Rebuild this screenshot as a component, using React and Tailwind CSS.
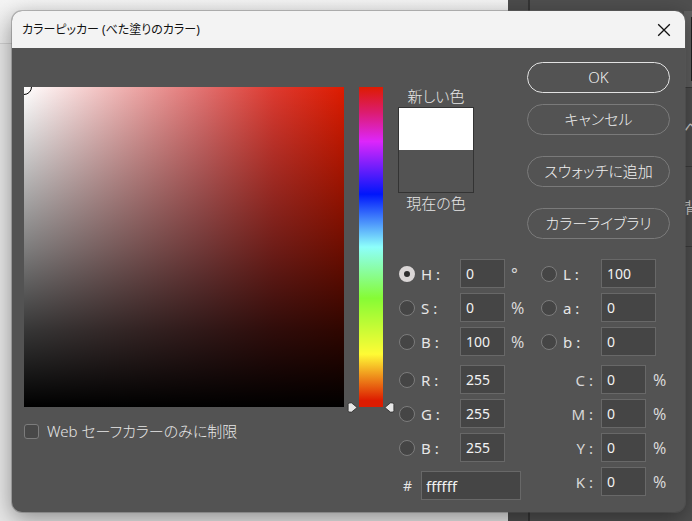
import { useState } from "react";

const BUTTON =
  "flex h-[31px] w-full items-center justify-center rounded-full border text-[15px] font-light text-[#f0f0f0]";

const RADIO =
  "size-4 shrink-0 appearance-none rounded-full border border-[#7c7c7c] bg-[#454545] checked:border-5 checked:border-[#dad6d6] checked:bg-[#2e2e2e]";

const LEFT_GROUPS = [
  [
    { id: "h", label: "H", value: "0", unit: "°" },
    { id: "s", label: "S", value: "0", unit: "%" },
    { id: "v", label: "B", value: "100", unit: "%" },
  ],
  [
    { id: "r", label: "R", value: "255" },
    { id: "g", label: "G", value: "255" },
    { id: "b", label: "B", value: "255" },
  ],
];

const LAB = [
  { id: "lab-l", label: "L", value: "100" },
  { id: "lab-a", label: "a", value: "0" },
  { id: "lab-b", label: "b", value: "0" },
];

const CMYK = [
  { id: "c", label: "C", value: "0" },
  { id: "m", label: "M", value: "0" },
  { id: "y", label: "Y", value: "0" },
  { id: "k", label: "K", value: "0" },
];

function NumberBox({ id, value, wide }) {
  return (
    <input
      id={id}
      type="text"
      defaultValue={value}
      className={`h-[29px] shrink-0 border border-[#686868] bg-[#454545] px-[5px] text-sm text-[#f2f2f2] outline-none ${wide ? "w-[55px]" : "w-[45px]"}`}
    />
  );
}

function ChannelRow({ field, mode, onMode, wide }) {
  return (
    <div className="flex items-center">
      <input
        type="radio"
        name="mode"
        aria-label={field.label}
        checked={mode === field.id}
        onChange={() => onMode(field.id)}
        className={RADIO}
      />
      <label
        htmlFor={field.id}
        className={`whitespace-pre pl-1.5 text-[15px] leading-5 ${wide ? "w-11" : "w-[45px]"}`}
      >
        {field.label} :
      </label>
      <NumberBox id={field.id} value={field.value} wide={wide} />
      {field.unit && (
        <span className="pl-1.5 text-base leading-5 text-[#d8d8d8]">{field.unit}</span>
      )}
    </div>
  );
}

function Backdrop() {
  return (
    <div className="absolute inset-0 flex overflow-hidden" aria-hidden="true">
      <div className="flex flex-1 flex-col bg-[#e6e6e6]">
        <div className="h-11 border-b border-[#cfcfcf] bg-linear-to-b from-[#f4f4f4] to-[#e9e9e9]" />
      </div>
      <div className="w-5 bg-[#4c4c4c]" />
      <div className="w-0.5 bg-[#353535]" />
      <div className="flex w-[162px] flex-col items-end bg-[#4f4f4f] text-[15px] leading-4 text-[#d0d0d0]">
        <div className="mt-[11px] h-[77px] w-2 border-b border-[#3c3c3c] bg-[#606060] py-1.5">
          <div className="ml-auto h-full w-px bg-[#222]" />
        </div>
        <div className="flex h-[79px] w-2 items-center justify-start overflow-hidden border-b border-[#3c3c3c]">
          <span>ペ</span>
        </div>
        <div className="flex h-20 w-2 items-center justify-start overflow-hidden border-b border-[#3c3c3c]">
          <span>背</span>
        </div>
      </div>
    </div>
  );
}

function ColorField() {
  return (
    <div className="relative h-80 min-w-0 flex-1 overflow-hidden bg-[linear-gradient(to_bottom,transparent,rgba(0,0,0,0.5)_50%,rgba(0,0,0,0.79)_76%,#000),linear-gradient(to_right,#fff,#e2706f_56%,#de3a30_78%,#dd1b00)]">
      <div className="absolute -top-2 -left-2 size-4 rounded-full border border-black" />
    </div>
  );
}

function HueSlider() {
  return (
    <div className="relative mx-[15px] h-80 w-6 shrink-0">
      <input
        type="range"
        min="0"
        max="360"
        defaultValue="0"
        aria-label="H"
        className="block h-full w-full appearance-none bg-[linear-gradient(to_bottom,#dd1b00,#dc1c70_8%,#dd26fb_17%,#0016fb_33.5%,#8dfffb_50%,#86fb35_66%,#fffb35_83.5%,#dd1b00_98%)] [direction:rtl] [writing-mode:vertical-lr] [&::-webkit-slider-thumb]:opacity-0"
      />
      <svg
        viewBox="0 0 10 10"
        className="absolute -bottom-1.5 -left-3 size-[11px]"
      >
        <path
          d="M1 2.2Q1 .8 2.6.8H4.2L9.2 5 4.2 9.2H2.6Q1 9.2 1 7.8Z"
          fill="#e6e6e6"
          stroke="#333"
          strokeWidth=".8"
        />
      </svg>
      <svg
        viewBox="0 0 10 10"
        className="absolute -right-3 -bottom-1.5 size-[11px]"
      >
        <path
          d="M9 2.2Q9 .8 7.4.8H5.8L.8 5 5.8 9.2H7.4Q9 9.2 9 7.8Z"
          fill="#e6e6e6"
          stroke="#333"
          strokeWidth=".8"
        />
      </svg>
    </div>
  );
}

export default function App() {
  const [mode, setMode] = useState("h");

  return (
    <div className="relative min-h-screen pt-[11px] pr-[7px] pb-[9px] pl-3 font-['Noto_Sans','Noto_Sans_CJK_JP',sans-serif] [font-feature-settings:'palt']">
      <Backdrop />
      <div
        role="dialog"
        aria-labelledby="title"
        className="relative overflow-hidden rounded-[10px] bg-[#535353] text-sm text-[#e6e6e6] shadow-[0_6px_22px_rgba(0,0,0,0.4),0_0_0_1px_rgba(120,120,120,0.4)]"
      >
        <header className="flex h-[37px] items-center justify-between bg-[#f3f3f3] pr-3.5 pl-2.5 text-[#111]">
          <h1 id="title" className="text-xs">
            カラーピッカー (べた塗りのカラー)
          </h1>
          <button type="button" aria-label="閉じる">
            <svg viewBox="0 0 14 14" className="size-3.5" stroke="#111" strokeWidth="1.3">
              <path d="M1.2 1.2 12.8 12.8M12.8 1.2 1.2 12.8" />
            </svg>
          </button>
        </header>

        <div className="flex pr-[15px] pb-3 pl-3">
          <div className="flex min-w-0 flex-1 flex-col pt-[39px]">
            <div className="flex">
              <ColorField />
              <HueSlider />
            </div>
            <label className="mt-3 flex items-center gap-2 text-[15px] leading-6 font-light">
              <input
                type="checkbox"
                className="size-[15px] shrink-0 appearance-none rounded-[3px] border border-[#7c7c7c] bg-[#484848]"
              />
              Web セーフカラーのみに制限
            </label>
          </div>

          <div className="flex w-[272px] shrink-0 flex-col">
            <div className="flex justify-between pt-3.5">
              <div className="flex w-19 flex-col items-center pt-6 text-[15px] leading-[21px] font-light">
                <span>新しい色</span>
                <div className="flex h-[86px] w-full flex-col border border-[#333]">
                  <div className="flex-1 bg-white" />
                  <div className="flex-1 bg-[#535353]" />
                </div>
                <span className="leading-5">現在の色</span>
              </div>
              <div className="flex w-[143px] flex-col gap-[21px]">
                <div className="flex flex-col gap-[11px]">
                  <button type="button" className={`${BUTTON} border-[#e2e2e2]`}>
                    OK
                  </button>
                  <button type="button" className={`${BUTTON} border-[#7a7a7a]`}>
                    キャンセル
                  </button>
                </div>
                <button type="button" className={`${BUTTON} border-[#7a7a7a]`}>
                  スウォッチに追加
                </button>
                <button type="button" className={`${BUTTON} border-[#7a7a7a]`}>
                  カラーライブラリ
                </button>
              </div>
            </div>

            <div className="flex justify-between pt-5 pl-px">
              <div className="flex flex-col gap-[9px]">
                {LEFT_GROUPS.map((group, i) => (
                  <div key={i} className="flex flex-col gap-[5px]">
                    {group.map((field) => (
                      <ChannelRow key={field.id} field={field} mode={mode} onMode={setMode} />
                    ))}
                  </div>
                ))}
                <div className="flex items-center">
                  <label htmlFor="hex" className="w-[22px] pl-1">
                    #
                  </label>
                  <input
                    id="hex"
                    type="text"
                    defaultValue="ffffff"
                    className="h-[29px] w-[100px] border border-[#686868] bg-[#454545] px-1 text-[15px] text-[#f2f2f2] outline-none"
                  />
                </div>
              </div>

              <div className="flex w-[129px] flex-col gap-[9px]">
                <div className="flex flex-col gap-[5px]">
                  {LAB.map((field) => (
                    <ChannelRow key={field.id} field={field} mode={mode} onMode={setMode} wide />
                  ))}
                </div>
                <div className="flex flex-col gap-[5px]">
                  {CMYK.map((field) => (
                    <div key={field.id} className="flex items-center text-[#d8d8d8]">
                      <label htmlFor={field.id} className="w-15 pr-2 text-right text-[15px] leading-5">
                        {field.label} :
                      </label>
                      <NumberBox id={field.id} value={field.value} />
                      <span className="pl-[7px] text-base leading-5">%</span>
                    </div>
                  ))}
                </div>
              </div>
            </div>
          </div>
        </div>
      </div>
    </div>
  );
}
